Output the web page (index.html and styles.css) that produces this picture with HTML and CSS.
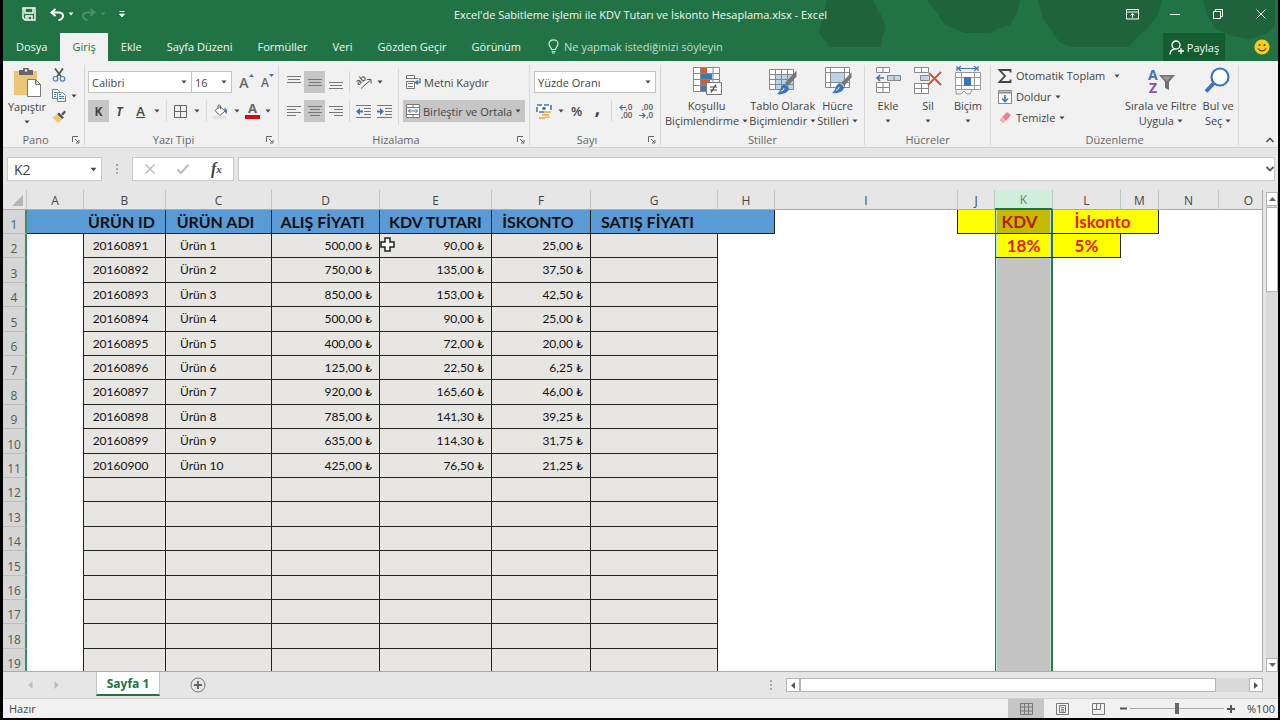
FILE: index.html
```html
<!DOCTYPE html>
<html lang="tr">
<head>
    <meta charset="UTF-8">
    <meta name="viewport" content="width=device-width, initial-scale=1.0">
    <title>Excel'de Sabitleme işlemi ile KDV Tutarı ve İskonto Hesaplama.xlsx - Excel</title>
    <link rel="stylesheet" href="styles.css">
</head>
<body>
    <svg class="sprite" aria-hidden="true">
        <symbol id="caret" viewBox="0 0 6 4"><path d="M0.5 0.5h5L3 3.5z" fill="currentColor"/></symbol>
        <symbol id="launcher" viewBox="0 0 8 8"><path d="M0.5 6V0.5H6M3 3l3.5 3.5M7 4v3H4" fill="none" stroke="currentColor"/></symbol>
    </svg>

    <div class="window">
        <header class="top">
            <svg class="blobs" viewBox="0 0 480 61" aria-hidden="true">
                <path d="M27 0h46l7 13 6 14-4 10-1 10H30l-11-14 4-16z"/>
                <path d="M127 0h93l-3 13-7 12-12 4-8 4h-25l-20-8-10-15z"/>
                <path d="M238 0h124l-4 15-10 13-11 9-8 10h-58l-12-5-8-12-8-11z"/>
                <path d="M403 0h72v26l-9 8-16 5-18-3-16-7-9-14z"/>
            </svg>
            <div class="titlebar">
                <div class="quick">
                    <button aria-label="Kaydet" class="q-save"><svg width="14" height="14" viewBox="0 0 14 14"><path d="M1 1h12v12H3l-2-2zM3 1v5h8V1M4 13V9h6v4M6 10v2" fill="none" stroke="#fff" stroke-width="1.4"/></svg></button>
                    <button aria-label="Geri Al" class="q-undo"><svg width="14" height="13" viewBox="0 0 14 13"><path d="M5.5 1L1.5 4.5 5.5 8M2 4.500h6.500c3 0 4.500 1.500 4.500 3.500s-2 4-4.500 4" fill="none" stroke="#fff" stroke-width="2"/></svg></button>
                    <button aria-label="Geri Al seçenekleri" class="q-caret"><svg width="6" height="4"><use href="#caret"/></svg></button>
                    <button aria-label="Yinele" class="q-undo dim"><svg width="14" height="13" viewBox="0 0 14 13"><path d="M8.500 1l4 3.500-4 3.500M12 4.500H5.500C2.500 4.500 1 6 1 8s2 4 4.500 4" fill="none" stroke="#fff" stroke-width="2"/></svg></button>
                    <button aria-label="Yinele seçenekleri" class="q-caret dim"><svg width="6" height="4"><use href="#caret"/></svg></button>
                    <button aria-label="Özelleştir" class="q-more"><svg width="6" height="7" viewBox="0 0 6 7"><path d="M0.500 0.500h5M0.500 3h5L3 6z" fill="#fff" stroke="#fff" stroke-width="0.800"/></svg></button>
                </div>
                <div class="doc-title">Excel'de Sabitleme işlemi ile KDV Tutarı ve İskonto Hesaplama.xlsx - Excel</div>
                <div class="win-buttons">
                    <button aria-label="Şerit görüntüleme"><svg width="13" height="11" viewBox="0 0 13 11"><path d="M0.500 0.500h12v9.500H0.500zM0.500 3h12M6.500 9V4.500M4.500 6.500l2-2 2 2" fill="none" stroke="#fff"/></svg></button>
                    <button aria-label="Simge durumuna küçült"><svg width="10" height="10"><path d="M0 5.500h10" stroke="#fff"/></svg></button>
                    <button aria-label="Geri yükle"><svg width="10" height="10" viewBox="0 0 10 10"><path d="M0.500 2.500h7v7h-7zM2.500 2.500v-2h7v7h-2" fill="none" stroke="#fff"/></svg></button>
                    <button aria-label="Kapat"><svg width="10" height="10"><path d="M0.500 0.500l9 9M9.500 0.500l-9 9" stroke="#fff"/></svg></button>
                </div>
            </div>
            <nav class="tabs">
                <button>Dosya</button>
                <button class="active">Giriş</button>
                <button>Ekle</button>
                <button>Sayfa Düzeni</button>
                <button>Formüller</button>
                <button>Veri</button>
                <button>Gözden Geçir</button>
                <button>Görünüm</button>
                <label class="tell">
                    <svg width="11" height="15" viewBox="0 0 11 15"><path d="M3.500 10.500C3.500 8.500 1 7.500 1 4.800a4.500 4 0 0 1 9 0c0 2.700-2.500 3.700-2.500 5.700zM3.500 12.500h4M4 14h3" fill="none" stroke="#d5e8dc" stroke-width="1.200"/></svg>
                    <input type="text" placeholder="Ne yapmak istediğinizi söyleyin" aria-label="Ne yapmak istediğinizi söyleyin">
                </label>
                <button class="share">
                    <svg width="15" height="15" viewBox="0 0 15 15"><circle cx="7" cy="5" r="4" fill="none" stroke="#fff" stroke-width="1.300"/><path d="M1 14.500c0-3.500 2-5 5-5.500M12 8v6M9 11h6" fill="none" stroke="#fff" stroke-width="1.300"/></svg>
                    Paylaş
                </button>
                <button class="smile" aria-label="Geri bildirim"><svg width="16" height="16" viewBox="0 0 16 16"><circle cx="8" cy="8" r="7.600" fill="#f8cb1c"/><circle cx="5.500" cy="6" r="1.100" fill="#5b4708"/><circle cx="10.500" cy="6" r="1.100" fill="#5b4708"/><path d="M4 9.500c2 3.200 6 3.200 8 0" fill="none" stroke="#5b4708" stroke-width="1.200"/></svg></button>
            </nav>
        </header>

        <section class="ribbon">
            <div class="group g-clip">
                <div class="body">
                    <button class="big paste">
                        <svg width="28" height="29" viewBox="0 0 28 29"><path d="M1 3h23v24H1z" fill="#ecc579"/><path d="M6 2h4a3 3 0 0 1 6 0h4v5H6z" fill="#666"/><circle cx="13" cy="2.500" r="1.200" fill="#f1f1f1"/><path d="M14.500 11.500h8l5 5v12h-13zM22.500 11.500v5h5" fill="#fff" stroke="#7a7a7a"/></svg>
                        <span>Yapıştır</span>
                        <svg class="caret" width="6" height="4"><use href="#caret"/></svg>
                    </button>
                    <div class="clip-tools">
                        <button aria-label="Kes"><svg width="14" height="14" viewBox="0 0 14 14"><path d="M3 0.500l6 8M11 0.500l-6 8" stroke="#555" stroke-width="1.800"/><circle cx="3.500" cy="10.800" r="2.300" fill="none" stroke="#4a7ebb" stroke-width="1.200"/><circle cx="10.500" cy="10.800" r="2.300" fill="none" stroke="#4a7ebb" stroke-width="1.200"/></svg></button>
                        <button aria-label="Kopyala"><svg width="14" height="13" viewBox="0 0 14 13"><path d="M0.500 0.500h5l2 2v7h-7z" fill="#fff" stroke="#6b7f96"/><path d="M5.500 3.500h5l3 3v6h-8z" fill="#fff" stroke="#6b7f96"/><path d="M2 3.500h3M2 5.500h2M2 7.500h2M7 7.500h5M7 9.500h5M7 5.500h2" stroke="#4a7ebb"/></svg><svg width="6" height="4"><use href="#caret"/></svg></button>
                        <button aria-label="Biçim Boyacısı"><svg width="14" height="13" viewBox="0 0 14 13"><path d="M0.500 7.500L5 4.500l5 5-4 3.500z" fill="#ecc579"/><path d="M5 4l2-1.500 5 5L10 9zM9 4l3.500-3.500 1.500 1.500L11 5.500" fill="#555"/></svg></button>
                    </div>
                </div>
                <div class="caption">Pano<button class="launch" aria-label="Pano seçenekleri"><svg width="8" height="8"><use href="#launcher"/></svg></button></div>
            </div>

            <div class="group g-font">
                <div class="body stack">
                    <div class="line">
                        <label class="drop font-name"><select aria-label="Yazı tipi"><option>Calibri</option></select><svg width="6" height="4"><use href="#caret"/></svg></label>
                        <label class="drop font-size"><select aria-label="Yazı tipi boyutu"><option>16</option></select><svg width="6" height="4"><use href="#caret"/></svg></label>
                        <button class="tool grow" aria-label="Yazı tipini büyüt">A<svg width="5" height="3" viewBox="0 0 5 3"><path d="M0 3h5L2.500 0z" fill="#3b76b8"/></svg></button>
                        <button class="tool grow small" aria-label="Yazı tipini küçült">A<svg width="5" height="3" viewBox="0 0 5 3"><path d="M0 0h5L2.500 3z" fill="#3b76b8"/></svg></button>
                    </div>
                    <div class="line">
                        <button class="tool on bold">K</button>
                        <button class="tool italic">T</button>
                        <button class="tool under">A</button>
                        <button class="arrow" aria-label="Altı çizili seçenekleri"><svg width="6" height="4"><use href="#caret"/></svg></button>
                        <i class="sep"></i>
                        <button class="tool" aria-label="Kenarlık"><svg width="13" height="13" viewBox="0 0 13 13"><path d="M0.500 0.500h12v12h-12zM6.500 0.500v12M0.500 6.500h12" fill="none" stroke="#666"/></svg></button>
                        <button class="arrow" aria-label="Kenarlık seçenekleri"><svg width="6" height="4"><use href="#caret"/></svg></button>
                        <i class="sep"></i>
                        <button class="tool" aria-label="Dolgu rengi"><svg width="15" height="15" viewBox="0 0 15 15"><path d="M2 6.500l5-4 5 4.500-5 4.500zM5 5V1.500Q6.500 0 7.500 2v3" fill="#fff" stroke="#666"/><path d="M11 4c3 0 3.500 3 2.500 6-1-1-2-2-1.500-4z" fill="#3b76b8"/><path d="M0 12h13v3H0z" fill="#e2e2e2"/></svg></button>
                        <button class="arrow" aria-label="Dolgu seçenekleri"><svg width="6" height="4"><use href="#caret"/></svg></button>
                        <button class="tool color-a" aria-label="Yazı tipi rengi">A</button>
                        <button class="arrow" aria-label="Renk seçenekleri"><svg width="6" height="4"><use href="#caret"/></svg></button>
                    </div>
                </div>
                <div class="caption">Yazı Tipi<button class="launch" aria-label="Yazı tipi ayarları"><svg width="8" height="8"><use href="#launcher"/></svg></button></div>
            </div>

            <div class="group g-align">
                <div class="body">
                    <div class="stack">
                        <div class="line">
                            <button class="tool" aria-label="Üste hizala"><svg width="14" height="14"><path d="M0 1.500h14M1 4.500h12M0 7.500h14" stroke="#777"/></svg></button>
                            <button class="tool on" aria-label="Ortaya hizala"><svg width="14" height="14"><path d="M0 4.500h14M1 7.500h12M0 10.500h14" stroke="#777"/></svg></button>
                            <button class="tool" aria-label="Alta hizala"><svg width="14" height="14"><path d="M0 7.500h14M1 10.500h12M0 13.500h14" stroke="#777"/></svg></button>
                            <i class="sep"></i>
                            <button class="tool" aria-label="Yönlendirme"><svg width="16" height="16" viewBox="0 0 16 16"><text class="ab" x="0" y="9" transform="rotate(-40 5 7)">ab</text><path d="M5 14.500L14.500 6M11 5.500h4v4" fill="none" stroke="#555"/></svg></button>
                            <button class="arrow" aria-label="Yön seçenekleri"><svg width="6" height="4"><use href="#caret"/></svg></button>
                        </div>
                        <div class="line">
                            <button class="tool" aria-label="Sola hizala"><svg width="14" height="12"><path d="M0 1.500h14M0 4.500h9M0 7.500h14M0 10.500h9" stroke="#777"/></svg></button>
                            <button class="tool on" aria-label="Ortala"><svg width="14" height="12"><path d="M0 1.500h14M2 4.500h10M0 7.500h14M2 10.500h10" stroke="#777"/></svg></button>
                            <button class="tool" aria-label="Sağa hizala"><svg width="14" height="12"><path d="M0 1.500h14M5 4.500h9M0 7.500h14M5 10.500h9" stroke="#777"/></svg></button>
                            <i class="sep"></i>
                            <button class="tool" aria-label="Girintiyi azalt"><svg width="15" height="13" viewBox="0 0 15 13"><path d="M0 0.500h15M8 3.500h7M8 6.500h7M8 9.500h7M0 12.500h15" stroke="#777"/><path d="M0 6.500l4-3.500v2.500h3v2H4V10z" fill="#3b76b8"/></svg></button>
                            <button class="tool" aria-label="Girintiyi artır"><svg width="15" height="13" viewBox="0 0 15 13"><path d="M0 0.500h15M8 3.500h7M8 6.500h7M8 9.500h7M0 12.500h15" stroke="#777"/><path d="M7 6.500L3 3v2.500H0v2h3V10z" fill="#3b76b8"/></svg></button>
                        </div>
                    </div>
                    <i class="sep tall"></i>
                    <div class="stack">
                        <button class="wide-tool"><svg width="15" height="14" viewBox="0 0 15 14"><path d="M0.500 0.500h8v3h-8zM0.500 6.500h8v7h-8z" fill="#fff" stroke="#777"/><path d="M0 3.500h12M2 8.500h5M2 11.500h5" stroke="#777"/><path d="M14 3v4.500h-4M12 5.500l-2.500 2 2.500 2" fill="none" stroke="#3b76b8" stroke-width="1.300"/></svg>Metni Kaydır</button>
                        <button class="wide-tool on"><svg width="14" height="14" viewBox="0 0 14 14"><path d="M0.500 0.500h13v13h-13z" fill="#fff" stroke="#777"/><path d="M0 3.500h14M0 10.500h14M7 0v3.500M7 10.500V14" stroke="#777"/><path d="M2.500 7h9M4.500 5L2.500 7l2 2M9.500 5l2 2-2 2" fill="none" stroke="#3b76b8"/></svg>Birleştir ve Ortala<svg class="caret" width="6" height="4"><use href="#caret"/></svg></button>
                    </div>
                </div>
                <div class="caption">Hizalama<button class="launch" aria-label="Hizalama ayarları"><svg width="8" height="8"><use href="#launcher"/></svg></button></div>
            </div>

            <div class="group g-num">
                <div class="body stack">
                    <label class="drop"><select aria-label="Sayı biçimi"><option>Yüzde Oranı</option></select><svg width="6" height="4"><use href="#caret"/></svg></label>
                    <div class="line">
                        <button class="tool" aria-label="Finansal sayı biçimi"><svg width="16" height="15" viewBox="0 0 16 15"><path d="M1 1h14v7H1z" fill="#fff" stroke="#3b76b8" stroke-width="1.600" stroke-dasharray="5 2"/><circle cx="8" cy="4.500" r="1.800" fill="#3b76b8"/><path d="M8 7h7v2H8zM6 10h7v2H6zM3 13h6v2H3zM9 12.500h5v1.500H9z" fill="#ecb767"/></svg></button>
                        <button class="arrow" aria-label="Para birimi seçenekleri"><svg width="6" height="4"><use href="#caret"/></svg></button>
                        <button class="tool percent">%</button>
                        <button class="tool comma">,</button>
                        <i class="sep"></i>
                        <button class="tool dec" aria-label="Ondalık artır"><span><svg width="7" height="7"><path d="M1 3.500h6M3.500 1L1 3.500 3.500 6" fill="none" stroke="#3b76b8" stroke-width="1.200"/></svg>,0</span><span>,00</span></button>
                        <button class="tool dec" aria-label="Ondalık azalt"><span>,00</span><span><svg width="7" height="7"><path d="M0 3.500h6M3.500 1L6 3.500 3.500 6" fill="none" stroke="#3b76b8" stroke-width="1.200"/></svg>,0</span></button>
                    </div>
                </div>
                <div class="caption">Sayı<button class="launch" aria-label="Sayı ayarları"><svg width="8" height="8"><use href="#launcher"/></svg></button></div>
            </div>

            <div class="group g-style">
                <div class="body">
                    <button class="big">
                        <svg width="30" height="30" viewBox="0 0 30 30"><path d="M1.500 1.500h26v24h-26z" fill="#fff"/><path d="M9 2h6v5H9zM9 14h9v6H9z" fill="#d35c3a"/><path d="M9 8h11v6H9zM9 20h5v5H9z" fill="#3d7ab3"/><path d="M1.500 1.500h26v24h-26zM8.500 1.500v24M21 1.500v24M1.500 7.500h26M1.500 13.500h26M1.500 19.500h26" fill="none" stroke="#888"/><path d="M14.500 16.500h15v12h-15z" fill="#fff" stroke="#777"/><path d="M18 21h7M18 24h7M24 18.500l-5 8" stroke="#444" stroke-width="1.200"/></svg>
                        <span>Koşullu</span><span>Biçimlendirme <svg width="6" height="4"><use href="#caret"/></svg></span>
                    </button>
                    <button class="big">
                        <svg width="30" height="30" viewBox="0 0 30 30"><path d="M1.500 3.500h24v20h-24z" fill="#fff"/><path d="M8 9h17v14H8z" fill="#b9d3ea"/><path d="M1.500 3.500h24v20h-24zM7.500 3.500v20M13.500 3.500v20M19.500 3.500v20M1.500 8.500h24M1.500 13.500h24M1.500 18.500h24" fill="none" stroke="#888"/><path d="M28.500 4.500v6L20 20l-3-3z" fill="#777"/><path d="M17 18l4 4c0 5-7 7-12 6 4-2 3-9 8-10z" fill="#3b76b8"/><path d="M13 25c2 0 3-2 3-3" stroke="#fff" fill="none"/></svg>
                        <span>Tablo Olarak</span><span>Biçimlendir <svg width="6" height="4"><use href="#caret"/></svg></span>
                    </button>
                    <button class="big">
                        <svg width="30" height="30" viewBox="0 0 30 30"><path d="M2.500 1.500h24v20h-24z" fill="#fff"/><path d="M8 6h13v11H8z" fill="#b9d3ea"/><path d="M2.500 1.500h24v20h-24zM7.500 1.500v20M21.500 1.500v20M2.500 6.500h24M2.500 16.500h24" fill="none" stroke="#888"/><path d="M28.500 6.500v5L21 20l-3-3z" fill="#777"/><path d="M17 17l4 4c0 5-7 7-12 6 4-2 3-9 8-10z" fill="#3b76b8"/><path d="M13 24c2 0 3-2 3-3" stroke="#fff" fill="none"/></svg>
                        <span>Hücre</span><span>Stilleri <svg width="6" height="4"><use href="#caret"/></svg></span>
                    </button>
                </div>
                <div class="caption">Stiller</div>
            </div>

            <div class="group g-cells">
                <div class="body">
                    <button class="big">
                        <svg width="28" height="30" viewBox="0 0 28 30"><path d="M2.500 1.500h13v5h-13zM9 1.500v5M2.500 16.500h13v10h-13zM9 16.500v10M2.500 21.500h13" fill="#fff" stroke="#888"/><path d="M13.500 9.500h13v5h-13zM20 9.500v5" fill="#c3d6e6" stroke="#888"/><path d="M3 12h7M6 9l-3 3 3 3" fill="none" stroke="#3b76b8" stroke-width="1.600"/></svg>
                        <span>Ekle</span><svg class="caret" width="6" height="4"><use href="#caret"/></svg>
                    </button>
                    <button class="big">
                        <svg width="28" height="30" viewBox="0 0 28 30"><path d="M0.500 1.500h14v5h-14zM7.500 1.500v5M0.500 17.500h14v10h-14zM7.500 17.500v10M0.500 22.500h14" fill="#fff" stroke="#888"/><path d="M6.500 9.500h9v5h-9z" fill="#c3d6e6" stroke="#888"/><path d="M15 7l12 12M27 6L14 19" stroke="#d35432" stroke-width="2"/></svg>
                        <span>Sil</span><svg class="caret" width="6" height="4"><use href="#caret"/></svg>
                    </button>
                    <button class="big">
                        <svg width="28" height="30" viewBox="0 0 28 30"><path d="M3 0v5M24 0v5M4 2.500h19M7 0L4 2.500 7 5M20 0l3 2.500L20 5" fill="none" stroke="#3b76b8" stroke-width="1.200"/><path d="M1.500 6.500h25v17h-25zM1.500 11.500h25M1.500 19.500h25M7.500 6.500v17M20.500 6.500v17" fill="#fff" stroke="#999"/><path d="M10 11h7v9h-7z" fill="#3b76b8"/><path d="M2 24v4h5l3-3 3 3h3l2-4" fill="none" stroke="#999"/></svg>
                        <span>Biçim</span><svg class="caret" width="6" height="4"><use href="#caret"/></svg>
                    </button>
                </div>
                <div class="caption">Hücreler</div>
            </div>

            <div class="group g-edit">
                <div class="body">
                    <div class="edit-list">
                        <button class="auto-sum"><svg width="14" height="14" viewBox="0 0 14 14"><path d="M12.500 3.500V1H1.500L7 7l-5.500 6h11v-2.500" fill="none" stroke="#444" stroke-width="1.800"/></svg>Otomatik Toplam<svg class="caret" width="6" height="4"><use href="#caret"/></svg></button>
                        <button><svg width="14" height="14" viewBox="0 0 14 14"><path d="M0.500 0.500h13v13h-13z" fill="#fff" stroke="#888"/><path d="M0.500 2.500h13" stroke="#888" stroke-width="2"/><path d="M7 5v6.500M4 8.500l3 3 3-3" fill="none" stroke="#3b76b8" stroke-width="1.600"/></svg>Doldur<svg width="6" height="4"><use href="#caret"/></svg></button>
                        <button><svg width="14" height="14" viewBox="0 0 14 14"><path d="M4 6l5-5 4 3-5 6z" fill="#e8829a"/><path d="M3.500 6.500L7.500 10l-2 2-4-2.500z" fill="#f3a9b9"/></svg>Temizle<svg width="6" height="4"><use href="#caret"/></svg></button>
                    </div>
                    <button class="big">
                        <svg width="30" height="30" viewBox="0 0 30 30"><text class="az" x="2" y="14">A</text><text class="az z" x="3" y="27">Z</text><path d="M13 9h16l-6 7v8l-4-2v-6z" fill="#707070"/><path d="M16 10.500h9l-4 5z" fill="#999"/></svg>
                        <span>Sırala ve Filtre</span><span>Uygula <svg width="6" height="4"><use href="#caret"/></svg></span>
                    </button>
                    <button class="big">
                        <svg width="28" height="30" viewBox="0 0 28 30"><circle cx="16" cy="11" r="8.500" fill="#fff" stroke="#3b76b8" stroke-width="2.200"/><path d="M10 17l-8 8.500" stroke="#3b76b8" stroke-width="4"/></svg>
                        <span>Bul ve</span><span>Seç <svg width="6" height="4"><use href="#caret"/></svg></span>
                    </button>
                </div>
                <div class="caption">Düzenleme</div>
            </div>
            <button class="collapse" aria-label="Şeridi daralt"><svg width="8" height="6"><path d="M0.500 5L4 1.500 7.500 5" fill="none" stroke="#555" stroke-width="1.600"/></svg></button>
        </section>

        <section class="formula-bar">
            <label class="name-box"><input type="text" value="K2" aria-label="Ad kutusu"><svg width="7" height="5"><use href="#caret"/></svg></label>
            <i class="dots"></i>
            <div class="fx-buttons">
                <button aria-label="İptal"><svg width="10" height="10"><path d="M0.500 0.500l9 9M9.500 0.500l-9 9" stroke="#bbb" stroke-width="1.500"/></svg></button>
                <button aria-label="Gir"><svg width="12" height="10"><path d="M0.500 5.500L4 9l7.500-8.500" fill="none" stroke="#bbb" stroke-width="2"/></svg></button>
                <button class="fx" aria-label="İşlev ekle">f<sub>x</sub></button>
            </div>
            <label class="formula"><input type="text" aria-label="Formül"><svg width="8" height="6"><path d="M0.500 1L4 4.500 7.500 1" fill="none" stroke="#555" stroke-width="1.800"/></svg></label>
        </section>

        <main class="sheet">
            <div class="grid-area">
                <table>
                    <colgroup>
                        <col class="w-row"><col class="w-a"><col class="w-b"><col class="w-c"><col class="w-d"><col class="w-e"><col class="w-f"><col class="w-g"><col class="w-h"><col class="w-i"><col class="w-j"><col class="w-k"><col class="w-l"><col class="w-m"><col class="w-n"><col>
                    </colgroup>
                    <thead>
                        <tr><th class="corner"><svg width="11" height="11"><path d="M11 0v11H0z" fill="#b5b5b5"/></svg></th><th>A</th><th>B</th><th>C</th><th>D</th><th>E</th><th>F</th><th>G</th><th>H</th><th>I</th><th>J</th><th class="picked">K</th><th>L</th><th>M</th><th>N</th><th class="last">O</th></tr>
                    </thead>
                    <tbody>
                        <tr class="titles"><th>1</th><td class="blue"></td><td class="blue line-r">ÜRÜN ID</td><td class="blue line-r">ÜRÜN ADI</td><td class="blue line-r">ALIŞ FİYATI</td><td class="blue line-r mid">KDV TUTARI</td><td class="blue line-r">İSKONTO</td><td class="blue wide">SATIŞ FİYATI</td><td class="blue line-r"></td><td class="line-r"></td><td class="yellow"></td><td class="yellow sel">KDV</td><td class="yellow line-r" colspan="2">İskonto</td><td colspan="2"></td></tr>
                    </tbody>
                    <tbody class="rows">
                        <tr><th>2</th><td></td><td>20160891</td><td>Ürün 1</td><td>500,00 ₺</td><td>90,00 ₺</td><td>25,00 ₺</td><td></td><td colspan="3"></td><td class="sel rate">18%</td><td class="rate line-r">5%</td><td colspan="3"></td></tr>
                        <tr><th>3</th><td></td><td>20160892</td><td>Ürün 2</td><td>750,00 ₺</td><td>135,00 ₺</td><td>37,50 ₺</td><td></td><td colspan="3"></td><td class="sel"></td><td colspan="4"></td></tr>
                        <tr><th>4</th><td></td><td>20160893</td><td>Ürün 3</td><td>850,00 ₺</td><td>153,00 ₺</td><td>42,50 ₺</td><td></td><td colspan="3"></td><td class="sel"></td><td colspan="4"></td></tr>
                        <tr><th>5</th><td></td><td>20160894</td><td>Ürün 4</td><td>500,00 ₺</td><td>90,00 ₺</td><td>25,00 ₺</td><td></td><td colspan="3"></td><td class="sel"></td><td colspan="4"></td></tr>
                        <tr><th>6</th><td></td><td>20160895</td><td>Ürün 5</td><td>400,00 ₺</td><td>72,00 ₺</td><td>20,00 ₺</td><td></td><td colspan="3"></td><td class="sel"></td><td colspan="4"></td></tr>
                        <tr><th>7</th><td></td><td>20160896</td><td>Ürün 6</td><td>125,00 ₺</td><td>22,50 ₺</td><td>6,25 ₺</td><td></td><td colspan="3"></td><td class="sel"></td><td colspan="4"></td></tr>
                        <tr><th>8</th><td></td><td>20160897</td><td>Ürün 7</td><td>920,00 ₺</td><td>165,60 ₺</td><td>46,00 ₺</td><td></td><td colspan="3"></td><td class="sel"></td><td colspan="4"></td></tr>
                        <tr><th>9</th><td></td><td>20160898</td><td>Ürün 8</td><td>785,00 ₺</td><td>141,30 ₺</td><td>39,25 ₺</td><td></td><td colspan="3"></td><td class="sel"></td><td colspan="4"></td></tr>
                        <tr><th>10</th><td></td><td>20160899</td><td>Ürün 9</td><td>635,00 ₺</td><td>114,30 ₺</td><td>31,75 ₺</td><td></td><td colspan="3"></td><td class="sel"></td><td colspan="4"></td></tr>
                        <tr><th>11</th><td></td><td>20160900</td><td>Ürün 10</td><td>425,00 ₺</td><td>76,50 ₺</td><td>21,25 ₺</td><td></td><td colspan="3"></td><td class="sel"></td><td colspan="4"></td></tr>
                        <tr><th>12</th><td></td><td></td><td></td><td></td><td></td><td></td><td></td><td colspan="3"></td><td class="sel"></td><td colspan="4"></td></tr>
                        <tr><th>13</th><td></td><td></td><td></td><td></td><td></td><td></td><td></td><td colspan="3"></td><td class="sel"></td><td colspan="4"></td></tr>
                        <tr><th>14</th><td></td><td></td><td></td><td></td><td></td><td></td><td></td><td colspan="3"></td><td class="sel"></td><td colspan="4"></td></tr>
                        <tr><th>15</th><td></td><td></td><td></td><td></td><td></td><td></td><td></td><td colspan="3"></td><td class="sel"></td><td colspan="4"></td></tr>
                        <tr><th>16</th><td></td><td></td><td></td><td></td><td></td><td></td><td></td><td colspan="3"></td><td class="sel"></td><td colspan="4"></td></tr>
                        <tr><th>17</th><td></td><td></td><td></td><td></td><td></td><td></td><td></td><td colspan="3"></td><td class="sel"></td><td colspan="4"></td></tr>
                        <tr><th>18</th><td></td><td></td><td></td><td></td><td></td><td></td><td></td><td colspan="3"></td><td class="sel"></td><td colspan="4"></td></tr>
                        <tr><th>19</th><td></td><td></td><td></td><td></td><td></td><td></td><td></td><td colspan="3"></td><td class="sel"></td><td colspan="4"></td></tr>
                    </tbody>
                </table>
                <svg class="pointer" width="15" height="15" viewBox="0 0 15 15"><path d="M5 1h5v4h4v5h-4v4H5v-4H1V5h4z" fill="#fff" stroke="#222" stroke-width="1.500"/></svg>
            </div>
            <div class="vscroll">
                <button aria-label="Yukarı kaydır"><svg width="7" height="4"><path d="M0 4h7L3.500 0z" fill="#666"/></svg></button>
                <div class="thumb"></div>
                <button class="down" aria-label="Aşağı kaydır"><svg width="7" height="4"><path d="M0 0h7L3.500 4z" fill="#666"/></svg></button>
            </div>
        </main>

        <div class="sheet-tabs">
            <button class="nav" aria-label="Önceki sayfa"><svg width="5" height="8"><path d="M4.500 0v8L0 4z" fill="#bdbdbd"/></svg></button>
            <button class="nav" aria-label="Sonraki sayfa"><svg width="5" height="8"><path d="M0.500 0v8L5 4z" fill="#bdbdbd"/></svg></button>
            <button class="sheet-tab">Sayfa 1</button>
            <button class="add" aria-label="Yeni sayfa"><svg width="16" height="16" viewBox="0 0 16 16"><circle cx="8" cy="8" r="7" fill="none" stroke="#777"/><path d="M8 4v8M4 8h8" stroke="#666" stroke-width="2"/></svg></button>
            <i class="dots"></i>
            <div class="hscroll">
                <button aria-label="Sola kaydır"><svg width="4" height="7"><path d="M4 0v7L0 3.500z" fill="#555"/></svg></button>
                <div class="thumb"></div>
                <button aria-label="Sağa kaydır"><svg width="4" height="7"><path d="M0 0v7l4-3.500z" fill="#555"/></svg></button>
            </div>
        </div>

        <footer class="status">
            <span class="ready">Hazır</span>
            <button class="on" aria-label="Normal"><svg width="13" height="12"><path d="M0.500 0.500h12v11h-12zM4.500 0.500v11M8.500 0.500v11M0.500 4h12M0.500 8h12" fill="none" stroke="#777"/></svg></button>
            <button aria-label="Sayfa Düzeni"><svg width="13" height="12"><path d="M0.500 0.500h12v11h-12zM3.500 2.500h6v7h-6zM5 4.500h3M5 6.500h3M5 8h3" fill="none" stroke="#777"/></svg></button>
            <button aria-label="Sayfa Sonu Önizleme"><svg width="13" height="12"><path d="M0.500 0.500h12v11h-12zM4.500 0.500v6M8.500 0.500v6M0.500 6.500h8" fill="none" stroke="#777"/></svg></button>
            <button class="step" aria-label="Uzaklaştır"><svg width="7" height="7"><path d="M0 3.500h7" stroke="#555" stroke-width="2"/></svg></button>
            <input class="zoom" type="range" min="0" max="100" value="50" aria-label="Yakınlaştırma">
            <button class="step" aria-label="Yakınlaştır"><svg width="8" height="8"><path d="M0 4h8M4 0v8" stroke="#555" stroke-width="2"/></svg></button>
            <span class="percent-label">%100</span>
        </footer>
    </div>
</body>
</html>
```
FILE: styles.css
```css
* {
    box-sizing: border-box;
}
body {
    margin: 0;
    background-color: #000;
    font-family: "Open Sans", "Noto Sans", sans-serif;
    font-size: 11px;
    color: #444;
}
button {
    display: flex;
    align-items: center;
    justify-content: center;
    padding: 0;
    border: none;
    background: none;
    color: inherit;
    font: inherit;
    white-space: nowrap;
}
input, select {
    border: none;
    background: none;
    color: inherit;
    font: inherit;
    padding: 0;
    min-width: 0;
    outline: none;
}
svg {
    flex: none;
}
.sprite {
    position: absolute;
    width: 0;
    height: 0;
}
.window {
    display: flex;
    flex-direction: column;
    height: 100vh;
    border: solid #000;
    border-width: 0 2px 2px 3px;
    background-color: #e6e6e6;
    overflow: hidden;
}

/* Title bar and ribbon tabs */
.top {
    position: relative;
    background-color: #217346;
    color: #f2f8f4;
}
.blobs {
    position: absolute;
    top: 0;
    right: -2px;
    width: 480px;
    height: 61px;
    fill: #1e633b;
}
.titlebar {
    position: relative;
    display: grid;
    grid-template-columns: 1fr auto 1fr;
    align-items: center;
    height: 28px;
    margin-bottom: 5px;
}
.quick, .win-buttons {
    display: flex;
    align-items: center;
}
.quick {
    padding-left: 18px;
}
.q-save {
    width: 16px;
    margin-right: 12px;
}
.q-undo {
    width: 16px;
}
.q-caret {
    width: 12px;
    margin-right: 4px;
}
.q-more {
    width: 12px;
    margin-left: 3px;
}
.dim {
    opacity: 0.2;
}
.win-buttons {
    justify-content: flex-end;
    gap: 9px;
}
.win-buttons button {
    width: 34px;
    height: 28px;
}
.tabs {
    position: relative;
    display: flex;
    height: 28px;
    padding-left: 1px;
    gap: 1px;
}
.tabs button {
    padding: 0 12px 2px;
}
.tabs .active {
    background-color: #f1f1f1;
    color: #217346;
}
.tell {
    display: flex;
    align-items: center;
    flex: 1;
    gap: 5px;
    padding: 0 0 2px 14px;
}
.tell input {
    flex: 1;
}
.tell input::placeholder {
    color: #c6dccf;
    opacity: 1;
}
.tabs .share {
    width: 62px;
    padding: 0;
    gap: 3px;
    background-color: #145c32;
}
.tabs .smile {
    width: 52px;
    padding: 0 0 0 20px;
}

/* Ribbon */
.ribbon {
    display: flex;
    height: 87px;
    flex: none;
    background-color: #f1f1f1;
    border-bottom: 1px solid #d2d2d2;
}
.group {
    display: flex;
    flex-direction: column;
    flex: none;
    margin: 4px 0 2px;
    border-right: 1px solid #d8d8d8;
}
.body {
    display: flex;
    height: 67px;
    padding-left: 3px;
}
.caption {
    position: relative;
    height: 13px;
    padding-top: 1px;
    line-height: 14px;
    text-align: center;
    color: #666;
}
.launch {
    position: absolute;
    right: 4px;
    top: 4px;
}
.g-clip { width: 82px; }
.g-font { width: 194px; }
.g-align { width: 251px; }
.g-num { width: 131px; }
.g-style { width: 204px; }
.g-cells { width: 126px; }
.g-edit { width: 248px; }
.g-clip .caption,
.g-font .caption,
.g-align .caption,
.g-num .caption {
    padding-right: 16px;
}
.stack {
    display: flex;
    flex-direction: column;
    gap: 7px;
    padding-top: 6px;
}
.line {
    display: flex;
    height: 22px;
}
.tool {
    width: 21px;
    height: 22px;
}
.on {
    background-color: #c6c6c6;
}
.arrow {
    width: 12px;
}
.sep {
    width: 1px;
    height: 22px;
    margin: 0 3px;
    background-color: #d8d8d8;
}
.sep.tall {
    height: 56px;
    margin: 4px 4px 0 3px;
}
.drop {
    display: flex;
    align-items: center;
    height: 22px;
    padding: 0 4px 0 3px;
    border: 1px solid #c3c3c3;
    background-color: #fff;
}
.drop select {
    flex: 1;
    appearance: none;
}
.font-name { width: 104px; }
.font-size {
    width: 41px;
    margin-left: -1px;
}
.grow {
    margin-left: 4px;
    font-size: 14px;
    font-weight: 600;
    color: #666;
}
.grow svg {
    align-self: flex-start;
    margin-top: 3px;
}
.grow.small {
    margin-left: 0;
    font-size: 12px;
}
.bold {
    font-weight: bold;
    font-size: 12px;
}
.italic {
    font-style: italic;
    font-weight: bold;
    font-size: 12px;
}
.under {
    text-decoration: underline;
    font-weight: 600;
    font-size: 13px;
}
.color-a {
    height: 19px;
    border-bottom: 4px solid #e3000f;
    width: 15px;
    margin: 0 2px;
    font-weight: bold;
    font-size: 13px;
    color: #666;
}
.percent {
    font-size: 13px;
    font-weight: 600;
}
.comma {
    padding-bottom: 8px;
    font-size: 19px;
    font-weight: bold;
}
.ab {
    font-size: 9px;
    font-weight: 600;
    fill: #555;
}
.tool svg {
    overflow: visible;
}
.dec {
    flex-direction: column;
    align-items: flex-end;
    padding-right: 3px;
    font-size: 8px;
    line-height: 8px;
    font-weight: 600;
    color: #555;
}
.dec span {
    display: flex;
    align-items: center;
}
.az {
    font-size: 14px;
    font-weight: bold;
    fill: #3b76b8;
}
.az.z {
    fill: #8a4fb5;
}
.wide-tool {
    justify-content: flex-start;
    gap: 3px;
    height: 22px;
    padding: 0 4px 0 3px;
}
.wide-tool.on {
    width: 122px;
}
.wide-tool .caret {
    margin-left: auto;
}
.big {
    flex-direction: column;
    justify-content: flex-start;
    align-self: flex-start;
    line-height: 15px;
    padding-top: 1px;
}
.big > svg:first-child {
    margin-bottom: 2px;
}
.big span {
    display: flex;
    align-items: center;
    gap: 3px;
}
.big .caret {
    margin-top: 6px;
}
.paste {
    width: 42px;
    padding-top: 3px;
}
.clip-tools {
    display: flex;
    flex-direction: column;
    gap: 6px;
    padding: 2px 0 0 4px;
}
.clip-tools button {
    justify-content: flex-start;
    gap: 5px;
    height: 15px;
}
.g-align .body {
    padding-left: 4px;
}
.g-num .body {
    padding: 6px 4px 0 4px;
}
.g-style .body {
    justify-content: space-between;
    padding: 0 6px 0 4px;
}
.g-cells .big {
    width: 40px;
}
.g-edit .body {
    padding: 0 7px 0 7px;
    gap: 6px;
}
.edit-list {
    width: 121px;
}
.edit-list button {
    justify-content: flex-start;
    gap: 4px;
    width: 100%;
    height: 21px;
}
.auto-sum .caret {
    margin-left: 5px;
}
.collapse {
    align-self: flex-end;
    margin: 0 4px 4px auto;
}

/* Formula bar */
.formula-bar {
    display: flex;
    flex: none;
    height: 42px;
    padding: 9px 3px 9px 4px;
}
.name-box, .fx-buttons, .formula {
    display: flex;
    align-items: center;
    border: 1px solid #c9c9c9;
    background-color: #fff;
}
.name-box {
    width: 95px;
    padding: 0 4px 0 6px;
    font-size: 14px;
}
.name-box input {
    flex: 1;
}
.dots {
    width: 2px;
    height: 11px;
    margin: auto 14px;
    background: repeating-linear-gradient(#aaa 0 2px, transparent 2px 4px);
}
.fx-buttons {
    width: 102px;
}
.fx-buttons button {
    flex: 1;
}
.fx-buttons .fx {
    font-family: "Liberation Serif", serif;
    font-style: italic;
    font-weight: bold;
    font-size: 16px;
}
.fx sub {
    font-size: 11px;
}
.formula {
    flex: 1;
    margin-left: 4px;
}
.formula input {
    flex: 1;
}

/* Worksheet */
.sheet {
    display: flex;
    flex: 1;
    min-height: 0;
}
.grid-area {
    position: relative;
    flex: 1;
    min-width: 0;
    overflow: hidden;
    border-right: 1px solid #ababab;
    border-bottom: 1px solid #ababab;
}
table {
    width: 100%;
    table-layout: fixed;
    border-spacing: 0;
    background-color: #fff;
    font-family: Lato, "Open Sans", sans-serif;
    font-size: 12px;
    color: #111;
}
.w-row { width: 24px; }
.w-a { width: 57px; }
.w-b { width: 82px; }
.w-c { width: 106px; }
.w-d { width: 108px; }
.w-e { width: 112px; }
.w-f { width: 99px; }
.w-g { width: 127px; }
.w-h { width: 57px; }
.w-i { width: 183px; }
.w-j { width: 37px; }
.w-k { width: 58px; }
.w-l { width: 68px; }
.w-m { width: 38px; }
.w-n { width: 60px; }
th, td {
    height: 24px;
    padding: 0;
    line-height: 16px;
    text-align: center;
    overflow: hidden;
    white-space: nowrap;
}
thead th {
    height: 20px;
    padding-top: 2px;
    border-right: 1px solid #c4c4c4;
    border-bottom: 1px solid #ababab;
    background-color: #e6e6e6;
    font-family: "Open Sans", sans-serif;
    font-weight: normal;
    color: #444;
}
thead .corner {
    text-align: right;
    padding: 2px 3px 0 0;
    line-height: 0;
}
thead .last {
    padding-left: 16px;
    border-right: none;
}
thead .picked {
    background-color: #cfeedd;
    border-bottom: 2px solid #217346;
    color: #5c8570;
}
tbody th {
    border-right: 2px solid #3f8a62;
    border-bottom: 1px solid #bdbdbd;
    background-color: #d6d6d6;
    font-family: "Open Sans", sans-serif;
    font-weight: normal;
    vertical-align: bottom;
    color: #4a5f54;
}
.titles td {
    font-size: 16px;
    font-weight: bold;
    padding-right: 6px;
}
.titles .mid {
    padding-right: 0;
}
.titles .wide {
    padding-right: 14px;
}
.titles .blue {
    background-color: #5b9bd5;
    border-bottom: 1px solid #222;
}
.rows tr:nth-child(5n+2) td,
.rows tr:nth-child(5n+4) td {
    height: 25px;
}
.rows td:nth-child(n+3):nth-child(-n+8) {
    border-right: 1px solid #222;
    border-bottom: 1px solid #222;
    background-color: #e7e6e3;
}
.rows td:nth-child(2) {
    border-right: 1px solid #222;
}
.rows td:nth-child(3) {
    padding-right: 8px;
}
.rows td:nth-child(4) {
    padding-left: 14px;
    text-align: left;
}
.rows td:nth-child(n+5):nth-child(-n+7) {
    padding-right: 7px;
    text-align: right;
}
.sel {
    background-color: #c4c4c4;
    border-right: 2px solid #3c6e55;
    border-left: 1px solid #3c6e55;
    box-shadow: inset 1px 0 #b8ecd2, inset -1px 0 #b8ecd2;
}
.titles .yellow, .rows .rate {
    background-color: #ff0;
    border-bottom: 1px solid #222;
    color: #e8200c;
    font-size: 17px;
    font-weight: bold;
}
.titles .line-r, .rows .line-r {
    border-right: 1px solid #222;
}
.titles .sel {
    padding-right: 8px;
    background-color: #c5ba00;
    color: #b5200c;
}
.pointer {
    position: absolute;
    left: 377px;
    top: 47px;
}
.vscroll {
    display: flex;
    flex-direction: column;
    width: 12px;
    margin: 2px 0 0 3px;
    background-color: #dadada;
}
.vscroll button {
    height: 14px;
    border: 1px solid #b5b5b5;
    background-color: #fff;
}
.vscroll .thumb {
    height: 85px;
    margin-top: 1px;
    border: 1px solid #b5b5b5;
    background-color: #fff;
}
.vscroll .down {
    margin-top: auto;
}

/* Sheet tabs and status bar */
.sheet-tabs {
    display: flex;
    flex: none;
    align-items: center;
    height: 27px;
    padding: 0 15px 0 14px;
    border-bottom: 1px solid #cfcfcf;
}
.nav {
    width: 26px;
}
.sheet-tab {
    align-self: flex-start;
    width: 64px;
    height: 24px;
    margin-left: 27px;
    border: solid #c4c4c4;
    border-width: 0 1px;
    border-bottom: 2px solid #217346;
    background-color: #fff;
    font-size: 12px;
    font-weight: bold;
    color: #217346;
}
.add {
    margin: 0 auto 0 30px;
}
.hscroll {
    display: flex;
    width: 477px;
    height: 14px;
    background-color: #dadada;
}
.hscroll button {
    width: 14px;
    border: 1px solid #b5b5b5;
    background-color: #fff;
}
.hscroll .thumb {
    flex: 1;
    margin-right: 33px;
    border: 1px solid #b5b5b5;
    background-color: #fff;
}
.status {
    display: flex;
    flex: none;
    align-items: center;
    height: 19px;
    padding-right: 3px;
    background-color: #f1f1f1;
}
.ready {
    flex: 1;
    padding-left: 6px;
}
.status button {
    width: 36px;
    height: 19px;
}
.status .step {
    width: 14px;
}
.zoom {
    width: 94px;
    height: 14px;
    margin: 0;
    appearance: none;
    background: linear-gradient(#aaa, #aaa) center / 100% 1px no-repeat;
}
.zoom::-webkit-slider-thumb {
    appearance: none;
    width: 4px;
    height: 11px;
    background-color: #666;
}
.percent-label {
    padding-left: 9px;
}
```
